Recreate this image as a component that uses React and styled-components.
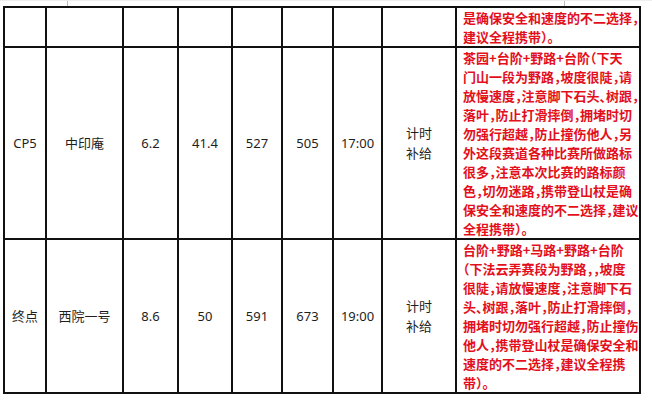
import React from 'react';
import styled, { createGlobalStyle } from 'styled-components';

const GlobalStyle = createGlobalStyle`
    html, body {
        margin: 0;
        padding: 0;
        background: #fff;
    }
    body {
        font-family: "Noto Sans", "Noto Sans CJK SC", sans-serif;
    }
`;

const Page = styled.div`
    width: 652px;
    height: 403px;
    overflow: hidden;
    background: #fff;
`;

const CropEdge = styled.div`
    display: flex;
    height: 6px;
    border-top: 1px solid #eeeeee;
    box-sizing: border-box;
`;

const Tick = styled.span`
    width: 1px;
    height: 100%;
    margin-left: ${props => props.left}px;
    background: #b8b8b8;
`;

const TableWrap = styled.div`
    padding-left: 3px;
`;

const Table = styled.table`
    border-collapse: collapse;
    table-layout: fixed;
    width: 636px;
    color: #1e1e1e;
    font-size: 13px;
`;

const Cell = styled.td`
    border: 2px solid #111;
    padding: 0;
    text-align: center;
    vertical-align: middle;
    line-height: 20px;
    white-space: nowrap;
    font-family: "Noto Sans", "Noto Sans CJK SC", sans-serif;
`;

const NoteCell = styled(Cell)`
    text-align: left;
    padding: 0 0 0 6px;
    color: #e3101c;
    font-weight: 700;
    font-size: 13px;
    line-height: 19px;
    font-family: "Noto Sans CJK SC", sans-serif;
    font-feature-settings: "halt";
`;

const NoteLine = styled.div`
    white-space: nowrap;
`;

const widths = [42, 77, 55, 54, 50, 51, 49, 74, 184];

const rows = [
    {
        cells: ['', '', '', '', '', '', '', ''],
        note: [
            '是确保安全和速度的不二选择，',
            '建议全程携带）。',
        ],
    },
    {
        cells: ['CP5', '中印庵', '6.2', '41.4', '527', '505', '17:00', '计时\n补给'],
        note: [
            '茶园+台阶+野路+台阶（下天',
            '门山一段为野路，坡度很陡，请',
            '放慢速度，注意脚下石头、树跟，',
            '落叶，防止打滑摔倒，拥堵时切',
            '勿强行超越，防止撞伤他人，另',
            '外这段赛道各种比赛所做路标',
            '很多，注意本次比赛的路标颜',
            '色，切勿迷路，携带登山杖是确',
            '保安全和速度的不二选择，建议',
            '全程携带）。',
        ],
    },
    {
        cells: ['终点', '西院一号', '8.6', '50', '591', '673', '19:00', '计时\n补给'],
        note: [
            '台阶+野路+马路+野路+台阶',
            '（下法云弄赛段为野路，，坡度',
            '很陡，请放慢速度，注意脚下石',
            '头、树跟，落叶，防止打滑摔倒，',
            '拥堵时切勿强行超越，防止撞伤',
            '他人，携带登山杖是确保安全和',
            '速度的不二选择，建议全程携',
            '带）。',
        ],
    },
];

const App = () => {
    return (
        <Page>
            <GlobalStyle />
            <CropEdge>
                <Tick left={67} />
                <Tick left={496} />
            </CropEdge>
            <TableWrap>
                <Table>
                    <colgroup>
                        {widths.map((w, i) => <col key={i} style={{ width: w }} />)}
                    </colgroup>
                    <tbody>
                        {rows.map((row, r) => (
                            <tr key={r}>
                                {row.cells.map((text, c) => (
                                    <Cell key={c}>
                                        {text.split('\n').map((part, p) => <div key={p}>{part}</div>)}
                                    </Cell>
                                ))}
                                <NoteCell>
                                    {row.note.map((line, l) => <NoteLine key={l}>{line}</NoteLine>)}
                                </NoteCell>
                            </tr>
                        ))}
                    </tbody>
                </Table>
            </TableWrap>
        </Page>
    );
};

export default App;
